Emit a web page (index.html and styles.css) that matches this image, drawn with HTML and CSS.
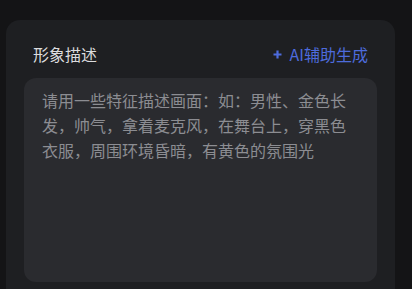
FILE: index.html
```html
<!DOCTYPE html>
<html lang="zh-CN">
<head>
  <meta charset="UTF-8">
  <meta name="viewport" content="width=device-width, initial-scale=1.0">
  <title>形象描述</title>
  <link rel="stylesheet" href="styles.css">
</head>
<body>
  <div class="card">
    <div class="card-head">
      <span class="title">形象描述</span>
      <a href="#" class="ai-btn">
        <svg class="plus" width="9" height="9" viewBox="0 0 9 9"><path d="M4.5 0.5v8M0.5 4.5h8" stroke="currentColor" stroke-width="2.2"/></svg>
        AI辅助生成
      </a>
    </div>
    <div class="desc-box">
      <p class="placeholder">请用一些特征描述画面：如：男性、金色长发，帅气，拿着麦克风，在舞台上，穿黑色衣服，周围环境昏暗，有黄色的氛围光</p>
    </div>
  </div>
</body>
</html>
```

FILE: styles.css
```css
body {
  margin: 0;
  padding: 20px 17px 0 6px;
  background-color: #141416;
  font-family: 'Noto Sans CJK SC', 'Noto Sans', sans-serif;
  height: 269px;
  overflow: hidden;
}
.card {
  background-color: #1e1f22;
  border-radius: 14px 14px 0 0;
  padding: 21px 18px 0 18px;
  height: 300px;
}
.card-head {
  display: flex;
  justify-content: space-between;
  align-items: center;
  padding: 0 9px;
  height: 26px;
}
.title {
  color: #dcdcde;
  font-size: 16px;
}
.ai-btn {
  display: flex;
  align-items: center;
  gap: 8px;
  color: #4d6bdc;
  font-size: 16px;
  text-decoration: none;
}
.plus {
  display: block;
}
.desc-box {
  margin-top: 11px;
  background-color: #2a2b2f;
  border-radius: 12px;
  height: 204px;
  padding: 10px 18px;
  box-sizing: border-box;
}
.placeholder {
  margin: 0;
  color: #8c8d92;
  font-size: 16px;
  line-height: 25px;
}
```
